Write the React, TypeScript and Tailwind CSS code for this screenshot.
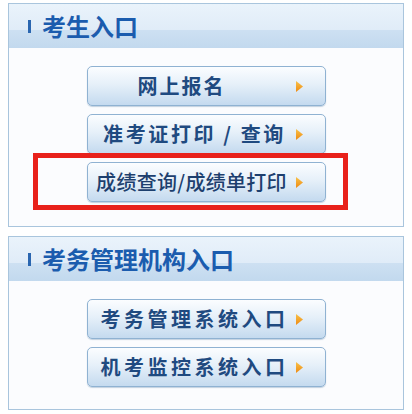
import React from "react";

type Entry = { label: string; className: string; marked?: boolean };

const examinee: Entry[] = [
  { label: "网上报名", className: "font-bold tracking-[2px] text-[20px] pr-[26px]" },
  { label: "准考证打印 / 查询", className: "font-bold tracking-[2.6px] text-[20px]" },
  {
    label: "成绩查询/成绩单打印",
    className: "font-medium text-[20px] tracking-[0.3px] text-[#1d3f6e] -ml-[6px]",
    marked: true,
  },
];

const affairs: Entry[] = [
  { label: "考务管理系统入口", className: "font-bold tracking-[3.5px] text-[20px]" },
  { label: "机考监控系统入口", className: "font-bold tracking-[3.5px] text-[20px]" },
];

function Arrow() {
  return (
    <svg width="7" height="11" viewBox="0 0 7 11" className="shrink-0 mr-[22px]">
      <defs>
        <linearGradient id="arr" x1="0" y1="0" x2="0" y2="1">
          <stop offset="0" stopColor="#f8c24a" />
          <stop offset="1" stopColor="#ee8a12" />
        </linearGradient>
      </defs>
      <path d="M0 0 L7 5.5 L0 11 Z" fill="url(#arr)" />
    </svg>
  );
}

function LinkButton({ item }: { item: Entry }) {
  return (
    <div className="relative w-[239px] h-10">
      <div className="flex items-center h-full rounded-[5px] border border-[#8fb2d2] bg-[linear-gradient(to_bottom,#fbfdff_0%,#e6f0f9_45%,#c4daef_100%)] shadow-[0_1px_1px_rgba(90,130,170,0.35)] text-[#1f4a80] pl-[6px]">
        <span className={"flex-1 min-w-0 text-center whitespace-nowrap leading-none " + item.className}>
          {item.label}
        </span>
        <Arrow />
      </div>
      {item.marked && (
        <div className="absolute -left-[54px] -right-[22px] -top-[9px] -bottom-[8px] border-[5px] border-[#e8211b]" />
      )}
    </div>
  );
}

function Panel({ title, items, bottom }: { title: string; items: Entry[]; bottom: string }) {
  return (
    <div className="mx-2 border border-[#a9c5dd] bg-[#fbfcfe]">
      <div className="flex items-center h-11 pl-[19px] bg-[linear-gradient(to_bottom,#eaf3fb_0%,#e0ecf8_58%,#cde0f2_60%,#c2d9ee_100%)]">
        <span className="w-[3px] h-[13px] bg-[#2a66b0] mr-[11px]" />
        <span className="text-[24px] font-bold leading-none text-[#1b5cae]">{title}</span>
      </div>
      <div className={"flex flex-col items-center gap-2 pt-[18px] " + bottom}>
        {items.map((item) => (
          <LinkButton key={item.label} item={item} />
        ))}
      </div>
    </div>
  );
}

export default function App() {
  return (
    <div
      className="w-[412px] h-[414px] bg-white pt-[3px] flex flex-col gap-[9px]"
      style={{ fontFamily: '"Noto Sans CJK SC", "Noto Sans", sans-serif' }}
    >
      <Panel title="考生入口" items={examinee} bottom="pb-6" />
      <Panel title="考务管理机构入口" items={affairs} bottom="pb-[22px]" />
    </div>
  );
}
